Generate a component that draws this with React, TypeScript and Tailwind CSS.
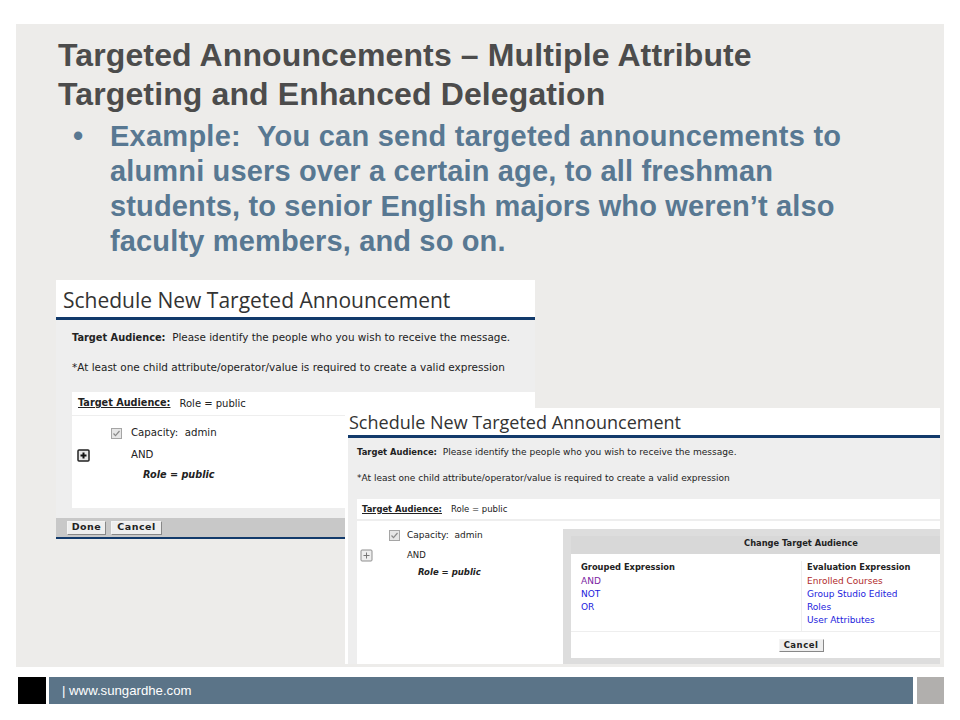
const sans = "font-['Liberation_Sans',Arial,sans-serif]";
const ui = "font-['DejaVu_Sans',Verdana,sans-serif]";

const PlusBox = ({ dark }: { dark?: boolean }) => (
    <svg width="13" height="13" viewBox="0 0 13 13" className="block">
        <rect
            x="1"
            y="1"
            width="11"
            height="11"
            rx="1"
            fill={dark ? "#e8e8e8" : "#eeeeee"}
            stroke={dark ? "#222222" : "#8f8f8f"}
            strokeWidth={dark ? 1.5 : 1}
        />
        <path d="M6.5 3.5v6M3.5 6.5h6" stroke={dark ? "#111111" : "#777777"} strokeWidth={dark ? 2 : 1} />
    </svg>
);

const CheckBox = () => (
    <svg width="11" height="11" viewBox="0 0 11 11" className="block">
        <rect x="0.5" y="0.5" width="10" height="10" fill="#e6e6e6" stroke="#a5a5a5" />
        <path d="M2.5 5.5l2 2.2 4-4.7" fill="none" stroke="#8a8a8a" strokeWidth="1.2" />
    </svg>
);

const FirstWindow = () => (
    <div className={`${ui} flex h-[258px] w-[479px] flex-col bg-white text-[#222]`}>
        <div className="flex h-[37px] shrink-0 items-end pb-[5px] pl-[7px] text-[21px] leading-[24px] font-['Open_Sans',sans-serif] text-[#333]">
            Schedule New Targeted Announcement
        </div>
        <div className="h-[3px] shrink-0 bg-[#123a6b]" />
        <div className="flex flex-1 flex-col bg-[#eeeeee]">
            <div className="pl-[16px] pt-[10px] text-[10.42px] leading-[14px]">
                <b className="text-[9.8px]">Target Audience:</b>&nbsp; Please identify the people who you wish to receive the message.
            </div>
            <div className="pl-[16px] pt-[15px] text-[10.48px] leading-[14px]">
                *At least one child attribute/operator/value is required to create a valid expression
            </div>
            <div className="ml-[16px] mt-[18px] flex h-[23px] shrink-0 items-center bg-white pl-[6px] text-[10px]">
                <b className="text-[9.7px] underline">Target Audience:</b>
                <span className="ml-[9px]">Role = public</span>
            </div>
            <div className="ml-[16px] mt-[1px] flex h-[92px] shrink-0 bg-white text-[10.2px]">
                <div className="ml-[5px] mt-[33px]">
                    <PlusBox dark />
                </div>
                <div className="ml-[21px] pt-[10px]">
                    <div className="flex items-center gap-[9px] leading-[14px]">
                        <CheckBox />
                        <span>Capacity:&nbsp; admin</span>
                    </div>
                    <div className="ml-[20px] mt-[8px] leading-[14px]">AND</div>
                    <div className="ml-[32px] mt-[6px] text-[9.7px] font-bold italic leading-[14px]">Role = public</div>
                </div>
            </div>
            <div className="mt-[10px] flex h-[19px] shrink-0 items-center gap-[5px] bg-[#c8c8c8] pl-[11px]">
                <div className="flex h-[14px] w-[39px] items-center justify-center border border-[#f4f4f4] border-r-[#888] border-b-[#888] bg-[#eeeeee] text-[9.5px] font-bold tracking-[0.5px]">
                    Done
                </div>
                <div className="flex h-[14px] w-[51px] items-center justify-center border border-[#f4f4f4] border-r-[#888] border-b-[#888] bg-[#eeeeee] text-[9.5px] font-bold tracking-[0.5px]">
                    Cancel
                </div>
            </div>
            <div className="h-[2px] shrink-0 bg-[#123a6b]" />
        </div>
    </div>
);

const ChangeAudience = () => (
    <div className="mt-[8px] flex w-[377px] shrink-0 flex-col bg-[#dddddd] pb-[6px] pl-[8px] pt-[7px]">
        <div className="flex flex-1 flex-col bg-white">
            <div className="flex h-[18px] items-center justify-center bg-[#d8d8d8] pb-[4px] pl-[91px] text-[8.3px] font-bold">
                Change Target Audience
            </div>
            <div className="flex h-[78px] border-b border-[#eeeeee] pt-[7px] text-[9px] leading-[13px]">
                <div className="w-[230px] pl-[10px]">
                    <div className="mb-[1px] text-[8.3px] font-bold">Grouped Expression</div>
                    <div className="text-[#7b1fa2]">AND</div>
                    <div className="text-[#2222dd]">NOT</div>
                    <div className="text-[#2222dd]">OR</div>
                </div>
                <div className="border-l border-[#eeeeee] pl-[5px]">
                    <div className="mb-[1px] text-[8.3px] font-bold">Evaluation Expression</div>
                    <div className="text-[#b02a2a]">Enrolled Courses</div>
                    <div className="text-[#2222dd]">Group Studio Edited</div>
                    <div className="text-[#2222dd]">Roles</div>
                    <div className="text-[#2222dd]">User Attributes</div>
                </div>
            </div>
            <div className="flex flex-1 items-center justify-center pl-[91px]">
                <div className="flex h-[13px] w-[45px] items-center justify-center border border-[#f4f4f4] border-r-[#888] border-b-[#888] bg-[#eeeeee] text-[8.5px] font-bold tracking-[0.5px]">
                    Cancel
                </div>
            </div>
        </div>
    </div>
);

const SecondWindow = () => (
    <div className={`${ui} absolute left-[329px] top-[384px] flex h-[256px] w-[595px] flex-col bg-white pl-[3px] text-[#222]`}>
        <div className="flex h-[27px] shrink-0 items-end pb-[2px] pl-[1px] text-[18px] leading-[22px] font-['Open_Sans',sans-serif] text-[#333]">
            Schedule New Targeted Announcement
        </div>
        <div className="h-[3px] shrink-0 bg-[#123a6b]" />
        <div className="flex flex-1 flex-col bg-[#eeeeee]">
            <div className="pl-[9px] pt-[8px] text-[9.05px] leading-[13px]">
                <b className="text-[8.4px]">Target Audience:</b>&nbsp; Please identify the people who you wish to receive the message.
            </div>
            <div className="pl-[9px] pt-[13px] text-[9.02px] leading-[13px]">
                *At least one child attribute/operator/value is required to create a valid expression
            </div>
            <div className="ml-[9px] mt-[14px] flex h-[20px] shrink-0 items-center bg-white pl-[5px] text-[8.5px]">
                <b className="text-[8.4px] underline">Target Audience:</b>
                <span className="ml-[9px]">Role = public</span>
            </div>
            <div className="ml-[9px] mt-[2px] flex min-h-0 flex-1 bg-white text-[9px]">
                <div className="ml-[3px] mt-[28px] w-[13px]">
                    <PlusBox />
                </div>
                <div className="ml-[16px] w-[174px] pt-[8px]">
                    <div className="flex items-center gap-[7px] leading-[13px]">
                        <CheckBox />
                        <span>Capacity:&nbsp; admin</span>
                    </div>
                    <div className="ml-[18px] mt-[7px] text-[8.5px] leading-[13px]">AND</div>
                    <div className="ml-[29px] mt-[4px] text-[8.5px] font-bold italic leading-[13px]">Role = public</div>
                </div>
                <ChangeAudience />
            </div>
        </div>
    </div>
);

export default function App() {
    return (
        <div className="flex h-[720px] w-[960px] flex-col bg-white pt-[24px]">
            <div className="relative mx-[16px] h-[643px] shrink-0 bg-[#edecea] pl-[40px] pt-[12px]">
                <h1 className={`${sans} pl-[2px] text-[32px] font-bold leading-[39px] tracking-[0.12px] text-[#4c4c4c]`}>
                    Targeted Announcements – Multiple Attribute
                    <br />
                    Targeting and Enhanced Delegation
                </h1>
                <div className={`${sans} mt-[5px] flex h-[161px] text-[29px] font-bold leading-[35px] text-[#587892]`}>
                    <span className="w-[54px] shrink-0 pl-[17px]">•</span>
                    <p className="tracking-[0.15px]">
                        <span className="tracking-[0.25px]">Example:&nbsp; You can send targeted announcements to</span>
                        <br />
                        alumni users over a certain age, to all freshman
                        <br />
                        students, to senior English majors who weren’t also
                        <br />
                        faculty members, and so on.
                    </p>
                </div>
                <FirstWindow />
                <SecondWindow />
            </div>
            <div className="mt-[10px] flex h-[27px] shrink-0">
                <div className="ml-[18px] w-[28px] bg-black" />
                <div className={`${sans} ml-[3px] flex w-[864px] items-center pl-[13px] text-[13.2px] text-white bg-[#5b7488]`}>
                    | www.sungardhe.com
                </div>
                <div className="ml-[4px] w-[27px] bg-[#b1afad]" />
            </div>
        </div>
    );
}
